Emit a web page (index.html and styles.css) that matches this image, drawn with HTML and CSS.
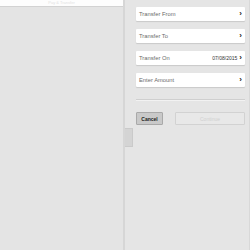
FILE: index.html
```html
<!DOCTYPE html>
<html lang="en">

<head>
    <meta charset="UTF-8">
    <title>Transfer</title>
    <link rel="stylesheet" href="styles.css">
</head>

<body>

    <div id="split">
        <div id="master">
            <div id="master-header">Pay &amp; Transfer</div>
            <div id="master-body"></div>
        </div>

        <div id="detail">
            <div class="field">
                <span class="label">Transfer From</span>
                <span class="chevron">&#8250;</span>
            </div>
            <div class="field">
                <span class="label">Transfer To</span>
                <span class="chevron">&#8250;</span>
            </div>
            <div class="field">
                <span class="label">Transfer On</span>
                <span class="value">07/08/2015</span>
                <span class="chevron">&#8250;</span>
            </div>
            <div class="field">
                <span class="label">Enter Amount</span>
                <span class="chevron">&#8250;</span>
            </div>

            <div class="divider"></div>

            <div id="actions">
                <button class="btn cancel">Cancel</button>
                <button class="btn continue" disabled>Continue</button>
            </div>

            <div id="handle"></div>
        </div>
    </div>

</body>

</html>
```

FILE: styles.css
```css
body {
    margin: 0;
    font-family: 'Liberation Sans', Arial, sans-serif;
    background: #e4e4e4;
}

#split {
    display: flex;
    height: 250px;
}

#master {
    width: 123px;
    display: flex;
    flex-direction: column;
    border-right: 2px solid #d6d6d6;
}

#master-header {
    height: 6px;
    background: #fdfdfd;
    border-bottom: 1px solid #d2d2d2;
    color: #e2e2e2;
    font-size: 4px;
    line-height: 6px;
    text-align: center;
}

#master-body {
    flex: 1;
    background: #e4e4e4;
}

#detail {
    position: relative;
    flex: 1;
    padding: 7px 4px 0 11px;
    background: #e5e5e5;
    border-right: 1px solid #d8d8d8;
    display: flex;
    flex-direction: column;
    gap: 8px;
}

.field {
    height: 14px;
    background: #fff;
    border-radius: 1px;
    box-shadow: 0 1px 1px rgba(0, 0, 0, 0.12);
    display: flex;
    align-items: center;
    padding: 0 3px 0 3px;
    font-size: 5.8px;
    color: #6a6a6a;
}

.label {
    flex: 1;
}

.value {
    font-size: 5px;
    color: #333;
    margin-right: 2px;
}

.chevron {
    font-size: 8px;
    font-weight: bold;
    color: #222;
    line-height: 8px;
}

.divider {
    margin-top: 4px;
    height: 1px;
    background: #cfcfcf;
    border-bottom: 1px solid #f2f2f2;
}

#actions {
    margin-top: 3px;
    display: flex;
    gap: 12px;
}

.btn {
    height: 13px;
    padding: 0;
    border-radius: 1px;
    font-family: inherit;
    font-size: 5px;
}

.cancel {
    width: 27px;
    background: #c9c9c9;
    border: 1px solid #a9a9a9;
    color: #222;
    font-weight: bold;
}

.continue {
    flex: 1;
    background: #e8e8e8;
    border: 1px solid #d2d2d2;
    color: #d0d0d0;
}

#handle {
    position: absolute;
    left: 0;
    top: 128px;
    width: 7px;
    height: 17px;
    background: #d4d4d4;
    border: 1px solid #cacaca;
    border-left: none;
}
```
